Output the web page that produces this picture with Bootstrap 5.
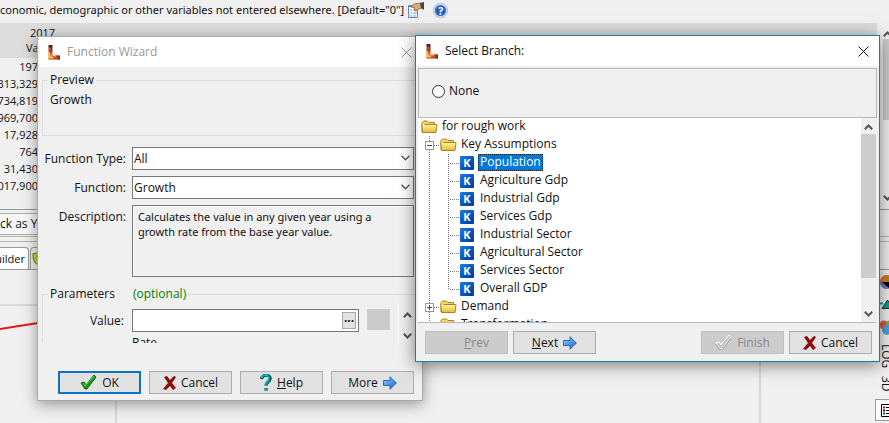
<!DOCTYPE html>
<html lang="en">
<head>
<meta charset="utf-8">
<meta name="viewport" content="width=device-width, initial-scale=1">
<title>Function Wizard</title>
<link rel="stylesheet" href="https://cdn.jsdelivr.net/npm/bootstrap@5.3.0/dist/css/bootstrap.min.css">
<style>
body{font-family:"Open Sans","Noto Sans",sans-serif;font-size:12px;line-height:16px;color:#111;background:#f0f0f0}
svg{display:block;flex:none}
button,input,select{font:inherit;color:inherit}
.desk{min-height:100vh;overflow:hidden}
.info-line{height:23px;padding-bottom:3px;white-space:nowrap;font-family:"Noto Sans",sans-serif;font-size:11px}
.grid-area{min-height:187px;border-bottom:1px solid #999}
.grid-area table{table-layout:fixed;width:100%;font-size:11px}
.grid-area thead{background:#dcdcdc}
.grid-area th{font-weight:400;line-height:15px;padding:2px 0 3px 26px}
.grid-area td{height:17px;line-height:17px;padding:0}
.num{display:flex;justify-content:flex-end;width:38px}
.side-scroll{width:12px;padding-left:6px;background:#f0f0f0}
.side-thumb{height:81px;margin:2px 0 75px;background:#cdcdcd}
.lock-row{padding:3px 0 1px;border-bottom:1px solid #b4b4b4}
.lock-btn{border:1px solid #aaa;border-left:0;background:#f8f8f8;height:22px;width:120px;padding:0;text-align:left;white-space:nowrap}
.tab-row{margin-top:4px;padding-top:5px;border-top:1px solid #b4b4b4;border-bottom:1px solid #999}
.tab-btn{width:29px;height:22px;border:1px solid #999;border-left:0;border-bottom:0;border-radius:0 4px 0 0;background:#fff;padding:0 3px 0 0;font-size:11px;display:flex;justify-content:flex-end;align-items:center}
.tab-btn.second{border-left:1px solid #999;border-radius:4px 4px 0 0;width:80px;margin-left:1px;padding-left:1px;background:#f0f0f0;justify-content:flex-start}
.chart-area{min-height:154px}
.side-tools{width:14px;padding-top:4px;overflow:hidden}
.side-label{writing-mode:vertical-rl;font-size:12px;line-height:14px}
.pressed{border:1px solid #999;border-right:0;background:#fafafa;height:22px;margin-top:7px;padding:4px 0 0 5px;width:14px}
.win{position:absolute;background:#f0f0f0;border:1px solid #aaa;box-shadow:0 3px 14px rgba(0,0,0,.4)}
.wizard{left:37px;top:36px;width:386px}
.branch{left:415px;top:35px;width:465px;border-color:#1f78b4;box-shadow:0 3px 16px rgba(0,0,0,.5)}
.title-bar{height:30px;background:#fff;padding:0 10px;gap:6px}
.title-bar button,.plain{border:0;background:transparent;padding:0}
.title-bar .idle{color:#999}
.group{border:1px solid #dcdcdc;border-right:0;margin:0 0 0 4px;padding:0 0 0 7px;position:relative}
.group legend{float:none;width:auto;font-size:12px;line-height:16px;margin:0 0 0 -2px;padding:0 2px;background:#f0f0f0}
.preview{margin-top:5px;height:64px}
.form-grid{display:grid;grid-template-columns:88px 1fr;column-gap:6px;margin:11px 8px 0 0}
.form-grid label,.form-grid .lab{text-align:right}
.pick{appearance:none;width:100%;height:23px;border:1px solid #777;border-radius:0;background:#fff;padding:0 1px;line-height:20px}
.pick-wrap{position:relative;height:23px;margin-bottom:6px}
.pick-wrap svg{position:absolute;right:4px;top:8px;pointer-events:none}
.desc{border:1px solid #777;height:72px;padding:3px 5px;line-height:15px;margin-bottom:9px;box-shadow:inset 1px 1px #fff;font-family:"Noto Sans",sans-serif;font-size:11px}
.params{height:56px;border-bottom:0;overflow:visible}
.optional{color:#008000;margin-left:18px}
.param-row{margin:7px 7px 0 0}
.val-box{width:227px;height:23px;border:1px solid #777;background:#fff}
.val-box input{border:0;width:100%;min-width:0;background:transparent;outline:0}
.dots{width:15px;height:17px;border:1px solid #aaa;background:#e1e1e1;padding:0 0 5px;line-height:8px;font-weight:700;margin:2px}
.blank{width:23px;height:21px;border:1px solid #ccc;background:#cbcbcb}
.param-scroll{width:17px;height:39px;border-left:1px solid #fff;margin:-4px 0 0 8px;padding:7px 0 5px 4px}
.rate{height:7px;overflow:hidden;margin:-8px 0 0 82px;line-height:13px}
.push{width:83px;height:23px;border:1px solid #adadad;background:#e1e1e1;padding:0;display:flex;align-items:center;justify-content:center;gap:5px}
.push.default{border:2px solid #0f72c8}
.push:disabled{background:#ccc;border-color:#bfbfbf;color:#888}
.wiz-foot{padding:29px 8px 6px;gap:8px}
.none-box{margin:2px 2px 0;height:50px;border:1px solid #b8b8b8;padding:0 13px 4px}
.none-box input{appearance:none;width:13px;height:13px;border:1px solid #333;border-radius:50%;background:#fff;margin:0}
.tree-pane{height:205px;margin:0 3px 0 2px;background:#fff;border-bottom:1px solid #b8b8b8;overflow:hidden}
.tree li{display:flex;height:18px;line-height:16px;white-space:nowrap}
.tree span{padding:0 2px}
.tree .picked{background:#0078d7;color:#fff;height:17px;outline:1px dotted #222;outline-offset:-1px}
.tree-scroll{width:15px;padding:6px 0 5px;background:#f0f0f0}
.tree-thumb{height:144px;align-self:stretch;background:#cdcdcd}
.branch-foot{padding:8px 7px 7px 9px;gap:5px}
</style>
<script src="https://cdn.jsdelivr.net/npm/bootstrap@5.3.0/dist/js/bootstrap.bundle.min.js"></script>
</head>
<body>
<svg width="0" height="0" class="position-absolute" aria-hidden="true">
<defs>
<linearGradient id="blue" x2="1" y2="1"><stop stop-color="#8fcaff"/><stop offset="1" stop-color="#1266d0"/></linearGradient>
<linearGradient id="kblue" x2="1" y2="1"><stop stop-color="#1b7ae8"/><stop offset="1" stop-color="#003796"/></linearGradient>
<linearGradient id="gold" x2="0" y2="1"><stop stop-color="#fff6a8"/><stop offset="1" stop-color="#e3bd38"/></linearGradient>
<linearGradient id="fire" x2="0" y2="1"><stop stop-color="#4a1d1c"/><stop offset=".45" stop-color="#b5391d"/><stop offset=".75" stop-color="#f08a3a"/><stop offset="1" stop-color="#a3301c"/></linearGradient>
<symbol id="leap" viewBox="0 0 13 15"><path d="M.5 0h4v10.500H12V14.500H.5z" fill="url(#fire)"/><path d="M.5 7h1.500v4l3 1v1.500H.5z" fill="#ffc04d"/><path d="M1 3h2v2H1z" fill="#8c6a6a"/><path d="M8 10.500h4v4h-2z" fill="#8f2d1c"/></symbol>
<symbol id="close" viewBox="0 0 11 11"><path d="M.5.5l10 10m0-10l-10 10" stroke="currentColor" fill="none"/></symbol>
<symbol id="down" viewBox="0 0 9 6"><path d="M.5.8l4 4 4-4" stroke="#555" stroke-width="1.3" fill="none"/></symbol>
<symbol id="downb" viewBox="0 0 9 6"><path d="M.8.8L4.5 4.5 8.2.8" stroke="#555" stroke-width="2" fill="none"/></symbol>
<symbol id="upb" viewBox="0 0 9 6"><path d="M.8 5.2L4.5 1.5 8.2 5.2" stroke="#555" stroke-width="2" fill="none"/></symbol>
<symbol id="tick" viewBox="0 0 17 15"><path d="M1 8l3-1 2 3L14 0l2 2L7 14H5z" fill="#12a012" stroke="#063c06" stroke-width=".8"/><path d="M3 8l2 3L14 1" stroke="#4fdc4f" fill="none"/></symbol>
<symbol id="tickoff" viewBox="0 0 17 15"><path d="M1 8l3-1 2 3L14 0l2 2L7 14H5z" fill="#c4c4c4" stroke="#fff"/><path d="M1 9l4 6h2l9-12" fill="none" stroke="#888" stroke-width=".8"/></symbol>
<symbol id="cross" viewBox="0 0 13 14"><path d="M1 1l3-1 3 4 4-4 2 1-4 6 4 5-3 2-3-4-4 4-3-1 5-6z" fill="#8b0a0a"/></symbol>
<symbol id="quest" viewBox="0 0 12 17"><path d="M1.500 5C2 0 10.500 0 10 5 9.500 8 6 8 6 11.500M6 14v2.500" fill="none" stroke="#043c48" stroke-width="3.200"/><path d="M1.500 4C2.500 0 9.500 0 9 4.500 8.500 8 5.500 8 5.500 11M5.500 14v2" fill="none" stroke="#0ab4bc" stroke-width="2"/></symbol>
<symbol id="arrow" viewBox="0 0 14 14"><path d="M.5 4.500H7V.8L13.400 7 7 13.200V9.500H.5z" fill="url(#blue)" stroke="#2060b4" stroke-width=".9"/></symbol>
<symbol id="folder" viewBox="0 0 17 14"><path d="M1 12V2.500L2.500 1h4L8 2.500h5.500V5" fill="#f3d662" stroke="#a58622"/><path d="M3.500 4.500h12.500L15 12.500H1.500L.8 4" fill="url(#gold)" stroke="#a58622"/></symbol>
<symbol id="key" viewBox="0 0 14 14"><rect width="14" height="14" rx="1" fill="url(#kblue)"/><text x="7" y="11" text-anchor="middle" font-family="Open Sans" font-weight="700" font-size="11" fill="#fff">K</text></symbol>
<symbol id="guide" viewBox="0 0 60 18"><path d="M11.500 0v18M30.500 0v18M32 9.500h10" stroke="#777" stroke-dasharray="1 1" fill="none"/><use href="#key" x="42" y="2" width="14" height="14"/></symbol>
</defs>
</svg>

<main class="desk position-relative d-flex flex-column">
  <div class="info-line d-flex align-items-center">
    <span>conomic, demographic or other variables not entered elsewhere. [Default="0"]</span>
    <button class="plain ms-1" type="button" aria-label="Properties"><svg width="17" height="16"><path d="M.5 3.500h9v12h-9z" fill="#eef6ff" stroke="#6685ad"/><path d="M1 3h9v2H1z" fill="#438bd0"/><path d="M2 8h2M5 8h4M2 11h2M5 11h4M2 14h2M5 14h3" stroke="#8aa8c8"/><path d="M3 5l3-3 7-1 1 5-4 1-2 2-2-1 1-2z" fill="#dfaa72" stroke="#8c5a31" stroke-width=".8"/><path d="M12 1l4-1v8l-3-2z" fill="#444"/></svg></button>
    <button class="plain ms-2" type="button" aria-label="Help topic"><svg width="15" height="15"><circle cx="7.500" cy="7.500" r="7" fill="#dfe9f8" stroke="#9cb5dc"/><circle cx="7.500" cy="7.500" r="5.500" fill="#2462c4"/><text x="7.500" y="11.500" text-anchor="middle" fill="#fff" font-size="11" font-weight="700">?</text></svg></button>
  </div>
  <div class="grid-area d-flex">
    <div class="flex-grow-1">
      <table>
        <thead><tr><th scope="col"><div class="ps-1">2017</div>Value</th></tr></thead>
        <tbody>
          <tr><td><div class="num">197</div></td></tr>
          <tr><td><div class="num">313,329</div></td></tr>
          <tr><td><div class="num">734,819</div></td></tr>
          <tr><td><div class="num">969,700</div></td></tr>
          <tr><td><div class="num">17,928</div></td></tr>
          <tr><td><div class="num">764</div></td></tr>
          <tr><td><div class="num">31,430</div></td></tr>
          <tr><td><div class="num">017,900</div></td></tr>
        </tbody>
      </table>
    </div>
    <div class="side-scroll pt-2"><svg width="9" height="6"><use href="#upb"/></svg><div class="side-thumb"></div><svg width="9" height="6"><use href="#downb"/></svg></div>
  </div>
  <div class="lock-row"><button class="lock-btn" type="button">ck as You</button></div>
  <div class="tab-row d-flex"><button class="tab-btn" type="button">uilder</button><button class="tab-btn second" type="button" aria-label="Shield"><svg width="13" height="14"><path d="M1 2l5-1 6 1c0 6-2 10-5 11C3 12 1 8 1 2z" fill="#f0dc50" stroke="#58b020" stroke-width="1.500"/><path d="M3 4h6M3 6h6M4 8h5" stroke="#a58c20"/></svg></button></div>
  <div class="chart-area d-flex flex-grow-1">
    <svg class="flex-grow-1" height="154" style="width:0" viewBox="0 0 875 154" preserveAspectRatio="xMinYMin slice"><path d="M0 35h875M116 0v154M760 0v154" stroke="#d8d8d8" stroke-width="2" fill="none"/><path d="M0 59l38-6" stroke="#e01818" stroke-width="2"/></svg>
    <div class="side-tools">
      <svg class="ms-1" width="16" height="16"><circle cx="8" cy="8" r="7" fill="#78a520"/><path d="M8 8L1 8A7 7 0 018 1z" fill="#e8702c"/><path d="M8 8v7A7 7 0 011 8z" fill="#7070cc"/><path d="M3 8h13l-6 6z" fill="#000"/></svg>
      <svg class="ms-1 mt-2" width="16" height="14"><path d="M0 5.500h4" stroke="#129a8c" stroke-width="2"/><path d="M3 10.500L8.500 2l5.500 8.500z" fill="#129a8c" stroke="#063c3a"/></svg>
      <svg class="ms-1 mt-2" width="16" height="16"><circle cx="5" cy="5" r="4.500" fill="#e45543"/><circle cx="11" cy="5" r="4.500" fill="#58b850"/><circle cx="8" cy="10" r="5" fill="#4f9fe0"/></svg>
      <div class="side-label mt-2 ms-1">LOG</div>
      <div class="side-label mt-2 ms-1">3D</div>
      <div class="pressed"><svg width="14" height="13"><path d="M.5.5h13v12H.5z" fill="#fff" stroke="#000"/><path d="M2 3.500h2" stroke="red" stroke-width="2"/><path d="M2 6.500h2" stroke="blue" stroke-width="2"/><path d="M2 9.500h2" stroke="green" stroke-width="2"/><path d="M5 3.500h7M5 6.500h7M5 9.500h7" stroke="#000"/></svg></div>
    </div>
  </div>

  <section class="win wizard" aria-label="Function Wizard">
    <div class="title-bar d-flex align-items-center"><svg width="13" height="15"><use href="#leap"/></svg><span class="idle">Function Wizard</span><button type="button" class="idle ms-auto" aria-label="Close wizard"><svg width="11" height="11"><use href="#close"/></svg></button></div>
    <fieldset class="group preview"><legend>Preview</legend><div class="mt-1">Growth</div></fieldset>
    <div class="form-grid">
      <label for="ftype" class="pt-1">Function Type:</label>
      <div class="pick-wrap"><select id="ftype" class="pick"><option>All</option></select><svg width="9" height="6"><use href="#down"/></svg></div>
      <label for="func" class="pt-1">Function:</label>
      <div class="pick-wrap"><select id="func" class="pick"><option>Growth</option></select><svg width="9" height="6"><use href="#down"/></svg></div>
      <div class="lab pt-1">Description:</div>
      <div class="desc">Calculates the value in any given year using a<br>growth rate from the base year value.</div>
    </div>
    <fieldset class="group params">
      <legend class="d-flex"><span>Parameters</span><span class="optional">(optional)</span></legend>
      <div class="param-row d-flex align-items-start"><label for="val" class="flex-grow-1 text-end pe-2 pt-1">Value:</label><div class="val-box d-flex"><input id="val" type="text"><button class="dots" type="button" aria-label="Browse value">...</button></div><button class="blank ms-2" type="button" aria-label="Chart value"></button><div class="param-scroll d-flex flex-column justify-content-between"><svg width="9" height="6"><use href="#upb"/></svg><svg width="9" height="6"><use href="#downb"/></svg></div></div>
      <div class="rate">Rate</div>
    </fieldset>
    <div class="wiz-foot d-flex justify-content-end">
      <button class="push default" type="button"><svg width="17" height="15"><use href="#tick"/></svg>OK</button>
      <button class="push" type="button"><svg width="13" height="14"><use href="#cross"/></svg>Cancel</button>
      <button class="push" type="button"><svg width="12" height="17"><use href="#quest"/></svg><span><u>H</u>elp</span></button>
      <button class="push" type="button">More<svg width="14" height="14"><use href="#arrow"/></svg></button>
    </div>
  </section>

  <section class="win branch" aria-label="Select Branch">
    <div class="title-bar d-flex align-items-center"><svg width="13" height="15"><use href="#leap"/></svg><span>Select Branch:</span><button type="button" class="ms-auto" aria-label="Close"><svg width="11" height="11"><use href="#close"/></svg></button></div>
    <div class="none-box d-flex align-items-center"><input type="radio" id="none"><label for="none" class="ms-1">None</label></div>
    <div class="tree-pane d-flex">
      <ul class="tree list-unstyled flex-grow-1 m-0">
        <li><svg width="22" height="18"><use href="#folder" x="3" y="2" width="17" height="14"/></svg><span>for rough work</span></li>
        <li><svg width="41" height="18"><path d="M11.500 0v18M16 9.500h6" stroke="#777" stroke-dasharray="1 1"/><rect x="7.500" y="5.500" width="8" height="8" fill="#fff" stroke="#999"/><path d="M9 9.500h5" stroke="#234a9c"/><use href="#folder" x="22" y="2" width="17" height="14"/></svg><span>Key Assumptions</span></li>
        <li><svg width="60" height="18"><use href="#guide"/></svg><span class="picked">Population</span></li>
        <li><svg width="60" height="18"><use href="#guide"/></svg><span>Agriculture Gdp</span></li>
        <li><svg width="60" height="18"><use href="#guide"/></svg><span>Industrial Gdp</span></li>
        <li><svg width="60" height="18"><use href="#guide"/></svg><span>Services Gdp</span></li>
        <li><svg width="60" height="18"><use href="#guide"/></svg><span>Industrial Sector</span></li>
        <li><svg width="60" height="18"><use href="#guide"/></svg><span>Agricultural Sector</span></li>
        <li><svg width="60" height="18"><use href="#guide"/></svg><span>Services Sector</span></li>
        <li><svg width="60" height="18"><path d="M11.500 0v18M30.500 0v10M32 9.500h10" stroke="#777" stroke-dasharray="1 1"/><use href="#key" x="42" y="2" width="14" height="14"/></svg><span>Overall GDP</span></li>
        <li><svg width="41" height="18"><path d="M11.500 0v18M16 9.500h6" stroke="#777" stroke-dasharray="1 1"/><rect x="7.500" y="5.500" width="8" height="8" fill="#fff" stroke="#999"/><path d="M9 9.500h5M11.500 7v5" stroke="#234a9c"/><use href="#folder" x="22" y="2" width="17" height="14"/></svg><span>Demand</span></li>
        <li><svg width="41" height="18"><path d="M11.500 0v18" stroke="#777" stroke-dasharray="1 1"/><use href="#folder" x="22" y="2" width="17" height="14"/></svg><span>Transformation</span></li>
      </ul>
      <div class="tree-scroll d-flex flex-column align-items-center"><svg width="9" height="6"><use href="#upb"/></svg><div class="tree-thumb mt-1"></div><svg class="mt-auto" width="9" height="6"><use href="#downb"/></svg></div>
    </div>
    <div class="branch-foot d-flex">
      <button class="push ps-3" type="button" disabled><span class="ps-1"><u>P</u>rev</span></button>
      <button class="push" type="button"><span><u>N</u>ext</span><svg width="14" height="14"><use href="#arrow"/></svg></button>
      <button class="push ms-auto" type="button" disabled><svg width="17" height="15"><use href="#tickoff"/></svg>Finish</button>
      <button class="push" type="button"><svg width="13" height="14"><use href="#cross"/></svg>Cancel</button>
    </div>
  </section>
</main>
</body>
</html>
